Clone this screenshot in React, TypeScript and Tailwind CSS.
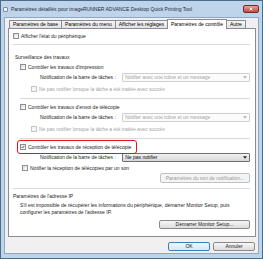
import { ChevronDown } from 'lucide-react';

const font = { fontFamily: '"Liberation Sans", Arial, sans-serif' };

function Box({ checked = false, disabled = false }: { checked?: boolean; disabled?: boolean }) {
  return (
    <span
      className={`flex h-[6px] w-[6px] shrink-0 items-center justify-center border ${
        disabled ? 'border-[#c5c5c5] bg-[#f4f4f4]' : 'border-[#8e8f8f] bg-gradient-to-br from-[#dcdcdc] to-white'
      }`}
    >
      {checked && (
        <svg viewBox="0 0 6 6" className="h-[6px] w-[6px]">
          <path d="M1 3 L2.5 4.5 L5 1.3" fill="none" stroke="#1e3f7a" strokeWidth="1.1" />
        </svg>
      )}
    </span>
  );
}

function Check({ label, checked, disabled, className = '' }: { label: string; checked?: boolean; disabled?: boolean; className?: string }) {
  return (
    <div className={`flex h-[10px] items-center gap-[2px] ${className}`}>
      <Box checked={checked} disabled={disabled} />
      <span className={disabled ? 'text-[#a3a3a3]' : 'text-[#1b1b1b]'}>{label}</span>
    </div>
  );
}

function Notify({ value, enabled }: { value: string; enabled?: boolean }) {
  return (
    <div className="flex h-[10px] items-center pl-[20px]">
      <span className="w-[83px] text-[#1b1b1b]">Notification de la barre de tâches :</span>
      <div
        className={`flex h-[9px] w-[129px] items-center justify-between rounded-[1px] border px-[2px] ${
          enabled
            ? 'border-[#707070] bg-gradient-to-b from-[#f2f2f2] to-[#d8d8d8] text-[#111]'
            : 'border-[#cfcfcf] bg-[#fbfbfb] text-[#a3a3a3]'
        }`}
      >
        <span>{value}</span>
        <svg viewBox="0 0 6 4" className="h-[3px] w-[4px]">
          <path d="M0 0 H6 L3 4 Z" fill={enabled ? '#222' : '#b0b0b0'} />
        </svg>
      </div>
    </div>
  );
}

function Sep({ className = '' }: { className?: string }) {
  return <div className={`h-px bg-[#d9d9d9] ${className}`} />;
}

function Btn({ label, disabled, def, className = '' }: { label: string; disabled?: boolean; def?: boolean; className?: string }) {
  return (
    <div
      className={`flex items-center justify-center rounded-[2px] border ${
        disabled
          ? 'border-[#bfc2c4] bg-[#f4f4f4] text-[#9a9a9a]'
          : def
          ? 'border-[#3c7fb1] bg-gradient-to-b from-[#eaf6fd] to-[#d5e9f6] text-[#1b1b1b]'
          : 'border-[#8a8a8a] bg-gradient-to-b from-[#f6f6f6] to-[#dcdcdc] text-[#1b1b1b]'
      } ${className}`}
    >
      {label}
    </div>
  );
}

const tabs = ['Paramètres de base', 'Paramètres du menu', 'Afficher les réglages', 'Paramètres de contrôle', 'Autre'];

export default function App() {
  return (
    <div style={font} className="flex h-[259px] w-[263px] flex-col overflow-hidden border border-[#4d6b8b] bg-[#bed4eb] text-[5px] leading-none">
      {/* title bar */}
      <div className="flex h-[16px] shrink-0 items-center pl-[2px] pr-[3px]">
        <div className="mr-[3px] h-[5px] w-[5px] rounded-[1px] border border-[#7d8da0] bg-[#eef2f7]" />
        <span className="text-[5px] text-[#1e2b3a]">Paramètres détaillés pour imageRUNNER ADVANCE Desktop Quick Printing Tool</span>
        <div className="ml-auto flex h-[8px] w-[16px] items-center justify-center rounded-[2px] border border-[#6b2f2f] bg-gradient-to-b from-[#e5a393] to-[#c2463a]">
          <svg viewBox="0 0 6 6" className="h-[4px] w-[4px]">
            <path d="M1 1 L5 5 M5 1 L1 5" stroke="white" strokeWidth="1.4" />
          </svg>
        </div>
      </div>

      {/* client */}
      <div className="mx-[3px] flex flex-1 flex-col border border-[#8fa7c0] bg-[#f0f0f0] pl-[3px] pr-[2px]">
        <div className="flex h-[10px] items-end pl-[1px] pt-[1px]">
          {tabs.map((t, i) => {
            const sel = i === 3;
            return (
              <div
                key={t}
                className={`flex items-center border border-b-0 px-[3px] ${
                  sel
                    ? 'relative z-10 -mx-px mb-[-1px] h-[10px] border-[#898c95] bg-white'
                    : 'h-[8px] border-[#898c95] bg-gradient-to-b from-[#f5f5f5] to-[#e3e3e3]'
                } ${i > 0 && !sel && i !== 4 ? 'border-l-0' : ''}`}
              >
                {t}
              </div>
            );
          })}
        </div>

        <div className="flex h-[209px] flex-col border border-[#898c95] bg-white pl-[4px] pr-[5px]">
          <Check label="Afficher l'état du périphérique" className="mt-[2px]" />
          <Sep className="mt-[3px]" />
          <div className="mt-[7px] flex h-[10px] items-center pl-[2px] text-[#1b1b1b]">Surveillance des travaux</div>

          <div className="pl-[7px]">
            <Check label="Contrôler les travaux d'impression" disabled={false} />
            <Notify value="Notifier avec une icône et un message" />
            <Check label="Ne pas notifier lorsque la tâche a été traitée avec succès" disabled className="mt-[2px] pl-[11px]" />
            <Sep className="mt-[4px]" />

            <Check label="Contrôler les travaux d'envoi de télécopie" className="mt-[3px]" />
            <Notify value="Notifier avec une icône et un message" />
            <Check label="Ne pas notifier lorsque la tâche a été traitée avec succès" disabled className="mt-[2px] pl-[11px]" />
            <Sep className="mt-[4px]" />

            <div className="relative mt-[3px]">
              <Check label="Contrôler les travaux de réception de télécopie" checked />
              <div className="pointer-events-none absolute left-[-3px] top-[-2px] h-[14px] w-[120px] rounded-[3px] border-[1.5px] border-[#e8141c]" />
            </div>
            <Notify value="Ne pas notifier" enabled />
            <Check label="Notifier la réception de télécopies par un son" className="mt-[1px] pl-[2px]" />
            <div className="flex justify-end">
              <Btn label="Paramètres du son de notification..." disabled className="h-[10px] w-[90px]" />
            </div>
          </div>

          <Sep className="mt-[5px]" />
          <div className="mt-[3px] flex h-[8px] items-center text-[#1b1b1b]">Paramètres de l'adresse IP</div>
          <div className="mt-[2px] pl-[7px] text-[#1b1b1b]">
            <div className="flex h-[7px] items-center">S'il est impossible de récupérer les informations du périphérique, démarrer Monitor Setup, puis</div>
            <div className="flex h-[7px] items-center">configurer les paramètres de l'adresse IP.</div>
          </div>
          <div className="mt-[4px] flex justify-end">
            <Btn label="Démarrer Monitor Setup..." className="h-[9px] w-[91px]" />
          </div>
        </div>

        <div className="mt-[5px] flex justify-end gap-[3px] pr-[1px]">
          <Btn label="OK" def className="h-[9px] w-[42px]" />
          <Btn label="Annuler" className="h-[9px] w-[42px]" />
        </div>
      </div>
      <div className="h-[4px] shrink-0" />
    </div>
  );
}
